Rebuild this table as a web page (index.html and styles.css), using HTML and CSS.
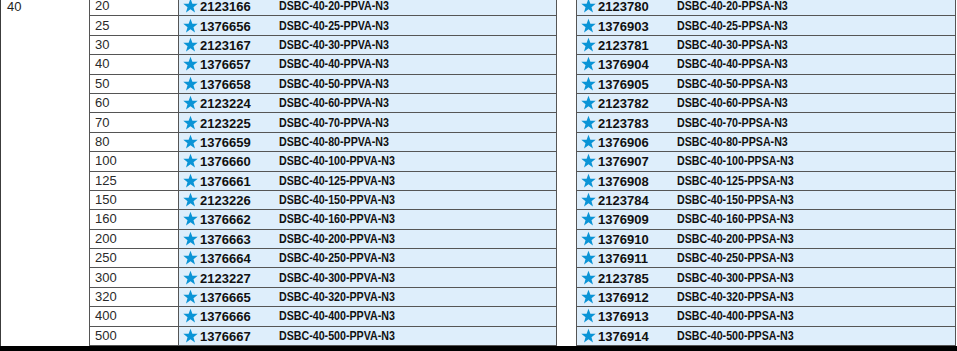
FILE: index.html
```html
<!DOCTYPE html>
<html>
<head>
<meta charset="utf-8">
<link rel="stylesheet" href="styles.css">
</head>
<body>
<div class="page">
<table class="parts">
<colgroup>
<col class="c-size"><col class="c-stroke"><col class="c-num"><col class="c-type"><col class="c-gap"><col class="c-num"><col class="c-type2">
</colgroup>
<tbody>
<tr><td class="size" rowspan="18">40</td><td class="stroke">20</td><td class="num"><svg class="star" viewBox="0 0 24 24"><polygon points="12,1 15,9 23.5,9.3 16.8,14.6 19.2,23 12,18.1 4.8,23 7.2,14.6 0.5,9.3 9,9"/></svg>2123166</td><td class="type"><span class="tx">DSBC-40-20-PPVA-N3</span></td><td class="gap"></td><td class="num"><svg class="star" viewBox="0 0 24 24"><polygon points="12,1 15,9 23.5,9.3 16.8,14.6 19.2,23 12,18.1 4.8,23 7.2,14.6 0.5,9.3 9,9"/></svg>2123780</td><td class="type"><span class="tx">DSBC-40-20-PPSA-N3</span></td></tr>
<tr><td class="stroke">25</td><td class="num"><svg class="star" viewBox="0 0 24 24"><polygon points="12,1 15,9 23.5,9.3 16.8,14.6 19.2,23 12,18.1 4.8,23 7.2,14.6 0.5,9.3 9,9"/></svg>1376656</td><td class="type"><span class="tx">DSBC-40-25-PPVA-N3</span></td><td class="gap"></td><td class="num"><svg class="star" viewBox="0 0 24 24"><polygon points="12,1 15,9 23.5,9.3 16.8,14.6 19.2,23 12,18.1 4.8,23 7.2,14.6 0.5,9.3 9,9"/></svg>1376903</td><td class="type"><span class="tx">DSBC-40-25-PPSA-N3</span></td></tr>
<tr><td class="stroke">30</td><td class="num"><svg class="star" viewBox="0 0 24 24"><polygon points="12,1 15,9 23.5,9.3 16.8,14.6 19.2,23 12,18.1 4.8,23 7.2,14.6 0.5,9.3 9,9"/></svg>2123167</td><td class="type"><span class="tx">DSBC-40-30-PPVA-N3</span></td><td class="gap"></td><td class="num"><svg class="star" viewBox="0 0 24 24"><polygon points="12,1 15,9 23.5,9.3 16.8,14.6 19.2,23 12,18.1 4.8,23 7.2,14.6 0.5,9.3 9,9"/></svg>2123781</td><td class="type"><span class="tx">DSBC-40-30-PPSA-N3</span></td></tr>
<tr><td class="stroke">40</td><td class="num"><svg class="star" viewBox="0 0 24 24"><polygon points="12,1 15,9 23.5,9.3 16.8,14.6 19.2,23 12,18.1 4.8,23 7.2,14.6 0.5,9.3 9,9"/></svg>1376657</td><td class="type"><span class="tx">DSBC-40-40-PPVA-N3</span></td><td class="gap"></td><td class="num"><svg class="star" viewBox="0 0 24 24"><polygon points="12,1 15,9 23.5,9.3 16.8,14.6 19.2,23 12,18.1 4.8,23 7.2,14.6 0.5,9.3 9,9"/></svg>1376904</td><td class="type"><span class="tx">DSBC-40-40-PPSA-N3</span></td></tr>
<tr><td class="stroke">50</td><td class="num"><svg class="star" viewBox="0 0 24 24"><polygon points="12,1 15,9 23.5,9.3 16.8,14.6 19.2,23 12,18.1 4.8,23 7.2,14.6 0.5,9.3 9,9"/></svg>1376658</td><td class="type"><span class="tx">DSBC-40-50-PPVA-N3</span></td><td class="gap"></td><td class="num"><svg class="star" viewBox="0 0 24 24"><polygon points="12,1 15,9 23.5,9.3 16.8,14.6 19.2,23 12,18.1 4.8,23 7.2,14.6 0.5,9.3 9,9"/></svg>1376905</td><td class="type"><span class="tx">DSBC-40-50-PPSA-N3</span></td></tr>
<tr><td class="stroke">60</td><td class="num"><svg class="star" viewBox="0 0 24 24"><polygon points="12,1 15,9 23.5,9.3 16.8,14.6 19.2,23 12,18.1 4.8,23 7.2,14.6 0.5,9.3 9,9"/></svg>2123224</td><td class="type"><span class="tx">DSBC-40-60-PPVA-N3</span></td><td class="gap"></td><td class="num"><svg class="star" viewBox="0 0 24 24"><polygon points="12,1 15,9 23.5,9.3 16.8,14.6 19.2,23 12,18.1 4.8,23 7.2,14.6 0.5,9.3 9,9"/></svg>2123782</td><td class="type"><span class="tx">DSBC-40-60-PPSA-N3</span></td></tr>
<tr><td class="stroke">70</td><td class="num"><svg class="star" viewBox="0 0 24 24"><polygon points="12,1 15,9 23.5,9.3 16.8,14.6 19.2,23 12,18.1 4.8,23 7.2,14.6 0.5,9.3 9,9"/></svg>2123225</td><td class="type"><span class="tx">DSBC-40-70-PPVA-N3</span></td><td class="gap"></td><td class="num"><svg class="star" viewBox="0 0 24 24"><polygon points="12,1 15,9 23.5,9.3 16.8,14.6 19.2,23 12,18.1 4.8,23 7.2,14.6 0.5,9.3 9,9"/></svg>2123783</td><td class="type"><span class="tx">DSBC-40-70-PPSA-N3</span></td></tr>
<tr><td class="stroke">80</td><td class="num"><svg class="star" viewBox="0 0 24 24"><polygon points="12,1 15,9 23.5,9.3 16.8,14.6 19.2,23 12,18.1 4.8,23 7.2,14.6 0.5,9.3 9,9"/></svg>1376659</td><td class="type"><span class="tx">DSBC-40-80-PPVA-N3</span></td><td class="gap"></td><td class="num"><svg class="star" viewBox="0 0 24 24"><polygon points="12,1 15,9 23.5,9.3 16.8,14.6 19.2,23 12,18.1 4.8,23 7.2,14.6 0.5,9.3 9,9"/></svg>1376906</td><td class="type"><span class="tx">DSBC-40-80-PPSA-N3</span></td></tr>
<tr><td class="stroke">100</td><td class="num"><svg class="star" viewBox="0 0 24 24"><polygon points="12,1 15,9 23.5,9.3 16.8,14.6 19.2,23 12,18.1 4.8,23 7.2,14.6 0.5,9.3 9,9"/></svg>1376660</td><td class="type"><span class="tx">DSBC-40-100-PPVA-N3</span></td><td class="gap"></td><td class="num"><svg class="star" viewBox="0 0 24 24"><polygon points="12,1 15,9 23.5,9.3 16.8,14.6 19.2,23 12,18.1 4.8,23 7.2,14.6 0.5,9.3 9,9"/></svg>1376907</td><td class="type"><span class="tx">DSBC-40-100-PPSA-N3</span></td></tr>
<tr><td class="stroke">125</td><td class="num"><svg class="star" viewBox="0 0 24 24"><polygon points="12,1 15,9 23.5,9.3 16.8,14.6 19.2,23 12,18.1 4.8,23 7.2,14.6 0.5,9.3 9,9"/></svg>1376661</td><td class="type"><span class="tx">DSBC-40-125-PPVA-N3</span></td><td class="gap"></td><td class="num"><svg class="star" viewBox="0 0 24 24"><polygon points="12,1 15,9 23.5,9.3 16.8,14.6 19.2,23 12,18.1 4.8,23 7.2,14.6 0.5,9.3 9,9"/></svg>1376908</td><td class="type"><span class="tx">DSBC-40-125-PPSA-N3</span></td></tr>
<tr><td class="stroke">150</td><td class="num"><svg class="star" viewBox="0 0 24 24"><polygon points="12,1 15,9 23.5,9.3 16.8,14.6 19.2,23 12,18.1 4.8,23 7.2,14.6 0.5,9.3 9,9"/></svg>2123226</td><td class="type"><span class="tx">DSBC-40-150-PPVA-N3</span></td><td class="gap"></td><td class="num"><svg class="star" viewBox="0 0 24 24"><polygon points="12,1 15,9 23.5,9.3 16.8,14.6 19.2,23 12,18.1 4.8,23 7.2,14.6 0.5,9.3 9,9"/></svg>2123784</td><td class="type"><span class="tx">DSBC-40-150-PPSA-N3</span></td></tr>
<tr><td class="stroke">160</td><td class="num"><svg class="star" viewBox="0 0 24 24"><polygon points="12,1 15,9 23.5,9.3 16.8,14.6 19.2,23 12,18.1 4.8,23 7.2,14.6 0.5,9.3 9,9"/></svg>1376662</td><td class="type"><span class="tx">DSBC-40-160-PPVA-N3</span></td><td class="gap"></td><td class="num"><svg class="star" viewBox="0 0 24 24"><polygon points="12,1 15,9 23.5,9.3 16.8,14.6 19.2,23 12,18.1 4.8,23 7.2,14.6 0.5,9.3 9,9"/></svg>1376909</td><td class="type"><span class="tx">DSBC-40-160-PPSA-N3</span></td></tr>
<tr><td class="stroke">200</td><td class="num"><svg class="star" viewBox="0 0 24 24"><polygon points="12,1 15,9 23.5,9.3 16.8,14.6 19.2,23 12,18.1 4.8,23 7.2,14.6 0.5,9.3 9,9"/></svg>1376663</td><td class="type"><span class="tx">DSBC-40-200-PPVA-N3</span></td><td class="gap"></td><td class="num"><svg class="star" viewBox="0 0 24 24"><polygon points="12,1 15,9 23.5,9.3 16.8,14.6 19.2,23 12,18.1 4.8,23 7.2,14.6 0.5,9.3 9,9"/></svg>1376910</td><td class="type"><span class="tx">DSBC-40-200-PPSA-N3</span></td></tr>
<tr><td class="stroke">250</td><td class="num"><svg class="star" viewBox="0 0 24 24"><polygon points="12,1 15,9 23.5,9.3 16.8,14.6 19.2,23 12,18.1 4.8,23 7.2,14.6 0.5,9.3 9,9"/></svg>1376664</td><td class="type"><span class="tx">DSBC-40-250-PPVA-N3</span></td><td class="gap"></td><td class="num"><svg class="star" viewBox="0 0 24 24"><polygon points="12,1 15,9 23.5,9.3 16.8,14.6 19.2,23 12,18.1 4.8,23 7.2,14.6 0.5,9.3 9,9"/></svg>1376911</td><td class="type"><span class="tx">DSBC-40-250-PPSA-N3</span></td></tr>
<tr><td class="stroke">300</td><td class="num"><svg class="star" viewBox="0 0 24 24"><polygon points="12,1 15,9 23.5,9.3 16.8,14.6 19.2,23 12,18.1 4.8,23 7.2,14.6 0.5,9.3 9,9"/></svg>2123227</td><td class="type"><span class="tx">DSBC-40-300-PPVA-N3</span></td><td class="gap"></td><td class="num"><svg class="star" viewBox="0 0 24 24"><polygon points="12,1 15,9 23.5,9.3 16.8,14.6 19.2,23 12,18.1 4.8,23 7.2,14.6 0.5,9.3 9,9"/></svg>2123785</td><td class="type"><span class="tx">DSBC-40-300-PPSA-N3</span></td></tr>
<tr><td class="stroke">320</td><td class="num"><svg class="star" viewBox="0 0 24 24"><polygon points="12,1 15,9 23.5,9.3 16.8,14.6 19.2,23 12,18.1 4.8,23 7.2,14.6 0.5,9.3 9,9"/></svg>1376665</td><td class="type"><span class="tx">DSBC-40-320-PPVA-N3</span></td><td class="gap"></td><td class="num"><svg class="star" viewBox="0 0 24 24"><polygon points="12,1 15,9 23.5,9.3 16.8,14.6 19.2,23 12,18.1 4.8,23 7.2,14.6 0.5,9.3 9,9"/></svg>1376912</td><td class="type"><span class="tx">DSBC-40-320-PPSA-N3</span></td></tr>
<tr><td class="stroke">400</td><td class="num"><svg class="star" viewBox="0 0 24 24"><polygon points="12,1 15,9 23.5,9.3 16.8,14.6 19.2,23 12,18.1 4.8,23 7.2,14.6 0.5,9.3 9,9"/></svg>1376666</td><td class="type"><span class="tx">DSBC-40-400-PPVA-N3</span></td><td class="gap"></td><td class="num"><svg class="star" viewBox="0 0 24 24"><polygon points="12,1 15,9 23.5,9.3 16.8,14.6 19.2,23 12,18.1 4.8,23 7.2,14.6 0.5,9.3 9,9"/></svg>1376913</td><td class="type"><span class="tx">DSBC-40-400-PPSA-N3</span></td></tr>
<tr><td class="stroke">500</td><td class="num"><svg class="star" viewBox="0 0 24 24"><polygon points="12,1 15,9 23.5,9.3 16.8,14.6 19.2,23 12,18.1 4.8,23 7.2,14.6 0.5,9.3 9,9"/></svg>1376667</td><td class="type"><span class="tx">DSBC-40-500-PPVA-N3</span></td><td class="gap"></td><td class="num"><svg class="star" viewBox="0 0 24 24"><polygon points="12,1 15,9 23.5,9.3 16.8,14.6 19.2,23 12,18.1 4.8,23 7.2,14.6 0.5,9.3 9,9"/></svg>1376914</td><td class="type"><span class="tx">DSBC-40-500-PPSA-N3</span></td></tr>
</tbody>
</table>
<div class="rule"></div>
</div>
</body>
</html>
```
FILE: styles.css
```css
html, body {
  margin: 0;
  padding: 0;
  background: #ffffff;
}
.page {
  width: 957px;
  height: 351px;
  overflow: hidden;
}
.parts {
  margin-top: -4px;
  width: 955px;
  border-collapse: collapse;
  table-layout: fixed;
  font-family: "Liberation Sans", Arial, sans-serif;
  font-size: 13px;
  color: #1e1e1e;
}
.c-size { width: 89px; }
.c-stroke { width: 89px; }
.c-num { width: 96px; }
.c-type { width: 282px; }
.c-gap { width: 20px; }
.c-type2 { width: 283px; }
.parts tr { height: 19.4px; }
.parts td {
  padding: 0 0 0 5px;
  line-height: 14px;
  white-space: nowrap;
  vertical-align: middle;
}
.size {
  vertical-align: top !important;
  padding-top: 3px !important;
  padding-left: 6px !important;
  border-left: 1px solid #3c3c3c;
  border-right: 1px solid #555;
}
.stroke {
  border: 1px solid #555;
  color: #2a2a2a;
}
.num {
  background: #deeefb;
  border-top: 1px solid #555;
  border-bottom: 1px solid #555;
  border-left: 1px solid #555;
  font-weight: bold;
  color: #111;
  padding-left: 4px !important;
}
.type {
  background: #deeefb;
  border-top: 1px solid #555;
  border-bottom: 1px solid #555;
  border-right: 1px solid #555;
  font-weight: bold;
  color: #111;
  padding-left: 4px !important;
}
.tx {
  display: inline-block;
  transform: scaleX(0.82);
  transform-origin: left center;
}
.gap {
  background: #ffffff;
}
.star {
  width: 15px;
  height: 15px;
  fill: #0a94d6;
  vertical-align: -2px;
  margin-right: 2px;
}
.rule {
  height: 6px;
  background: #000;
}
```
